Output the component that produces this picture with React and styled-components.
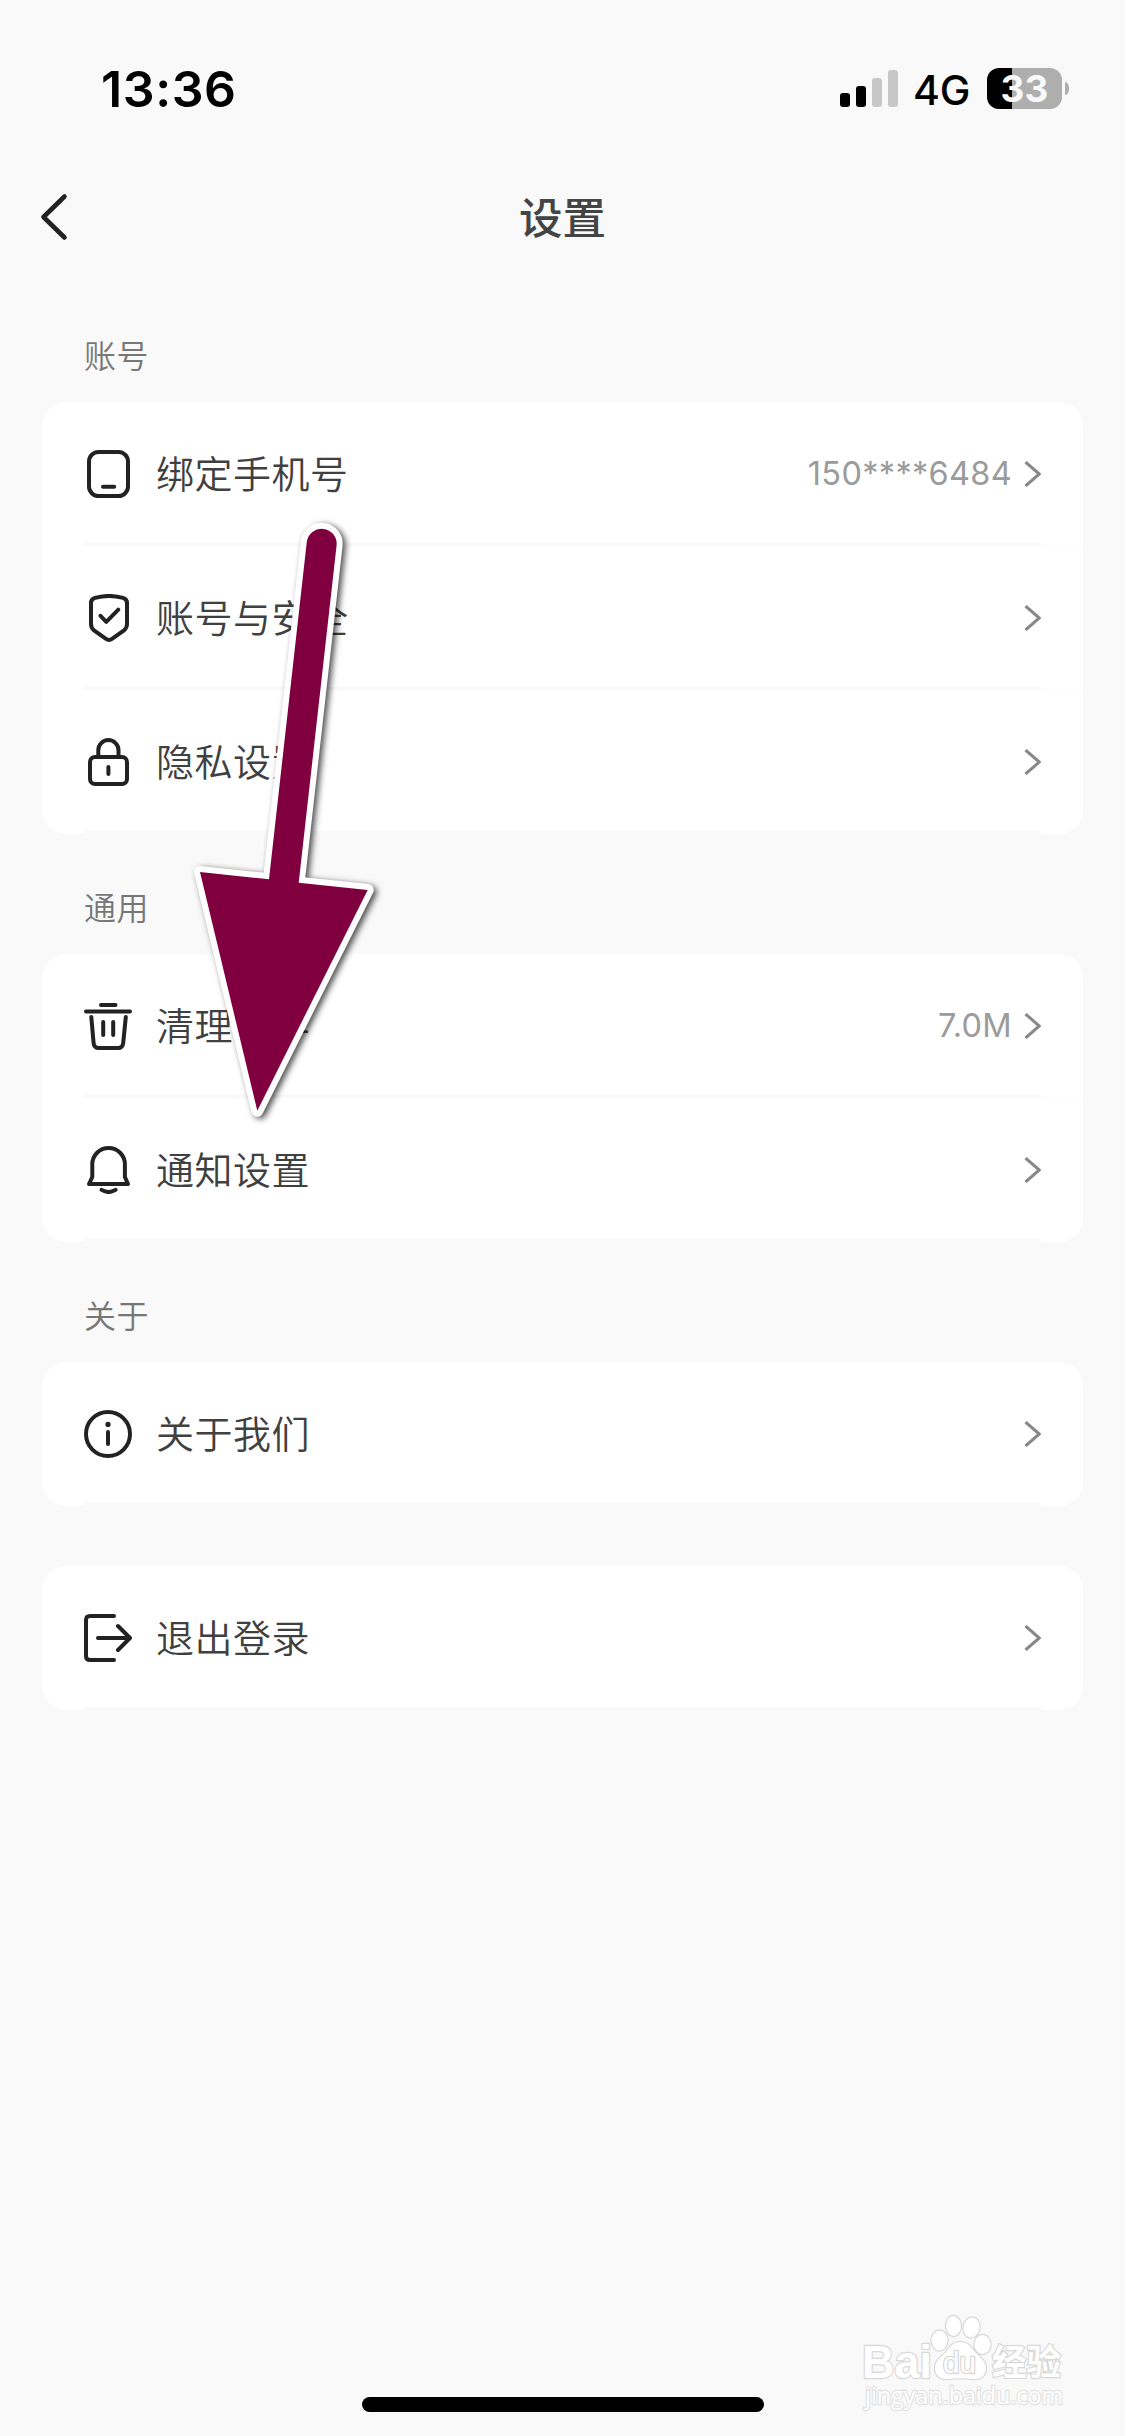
import styled, { createGlobalStyle } from "styled-components";

const GlobalStyle = createGlobalStyle`
* {
    box-sizing: border-box;
}
body {
    margin: 0;
    background-color: #f9f9f9;
    font-family: Inter, "Noto Sans CJK SC", sans-serif;
}
`;
const Screen = styled.div`
    position: relative;
    display: flex;
    flex-direction: column;
    width: 1125px;
    height: 2436px;
    overflow: hidden;
    background-color: #f9f9f9;
`;
const StatusBar = styled.div`
    display: flex;
    justify-content: space-between;
    align-items: center;
    height: 178px;
    padding: 0 56px 0 101px;
    color: #000;
`;
const Time = styled.span`
    font-size: 50px;
    font-weight: 600;
    line-height: 60px;
    letter-spacing: 0.6px;
`;
const StatusIcons = styled.div`
    display: flex;
    align-items: center;
`;
const Signal = styled.div`
    display: flex;
    align-items: flex-end;
    gap: 6px;
    height: 37px;
    margin: 0 16px 2px 0;
`;
const SignalBar = styled.i`
    width: 10px;
    height: ${(props) => props.$height}px;
    border-radius: 3px;
    background-color: ${(props) => props.$on ? '#000' : '#c7c7c7'};
`;
const Network = styled.span`
    width: 57px;
    margin-right: 16px;
    font-size: 41px;
    font-weight: 450;
    line-height: 50px;
    letter-spacing: -0.2px;
    text-indent: -1px;
    padding-top: 2px;
`;
const Battery = styled.div`
    display: flex;
    align-items: center;
    justify-content: center;
    width: 75px;
    height: 41px;
    margin-bottom: 1px;
    border-radius: 12px;
    background: linear-gradient(90deg, #000 25px, #aeaeae 25px);
    color: #f9f9f9;
    font-size: 37px;
    font-weight: 700;
    line-height: 41px;
`;
const BatteryCap = styled.i`
    width: 4px;
    height: 13px;
    margin: 0 0 1px 3px;
    border-radius: 0 4px 4px 0 / 0 6px 6px 0;
    background-color: #aeaeae;
`;
const NavBar = styled.header`
    display: grid;
    grid-template-columns: 100px 1fr 100px;
    align-items: center;
    height: 78px;
    padding: 0 38px;
`;
const BackIcon = styled.svg`
    width: 32px;
    height: 48px;
    fill: none;
    stroke: #222;
    stroke-width: 4.6;
    stroke-linecap: round;
    stroke-linejoin: round;
`;
const Title = styled.h1`
    margin: 0;
    padding-top: 1px;
    text-align: center;
    color: #444;
    font-size: 43.5px;
    font-weight: 500;
    line-height: 60px;
`;
const Content = styled.main`
    display: flex;
    flex-direction: column;
    padding: 26px 42px 0;
`;
const Section = styled.section`
    padding-top: ${(props) => props.$plain ? 60 : 30}px;
`;
const SectionTitle = styled.h2`
    height: 90px;
    margin: 0;
    padding-left: 42px;
    color: #777;
    font-size: 32px;
    font-weight: 350;
    line-height: 90px;
    letter-spacing: 0.6px;
`;
const Card = styled.div`
    border-radius: 24px;
    background-color: #fff;
    overflow: hidden;
`;
const Row = styled.div`
    display: flex;
    align-items: center;
    height: 144px;
    padding: 0 42px;
    background: linear-gradient(#f9f9f9, #f9f9f9) 42px 100% / 957px 3px no-repeat;
    &:not(:last-child) {
        background: linear-gradient(#f9f9f9, #f9f9f9) 42px 100% / 957px 3px no-repeat,
            linear-gradient(#fbfbfb, #fbfbfb) 100% 100% / 42px 1px no-repeat;
    }
`;
const RowIcon = styled.svg`
    width: 48px;
    height: 48px;
    margin-right: 24px;
    fill: none;
    stroke: #222;
    stroke-width: 4;
    stroke-linecap: round;
    stroke-linejoin: round;
`;
const RowLabel = styled.span`
    flex: 1;
    color: #404040;
    font-size: 38px;
    font-weight: 350;
    line-height: 56px;
    letter-spacing: 0.5px;
`;
const RowValue = styled.span`
    margin-right: 12px;
    color: #9b9b9b;
    font-size: 32.5px;
    font-weight: 370;
    line-height: 40px;
    letter-spacing: 0.3px;
`;
const Chevron = styled.svg`
    width: 17px;
    height: 26px;
    fill: none;
    stroke: #888;
    stroke-width: 3;
`;
const HomeIndicator = styled.div`
    width: 402px;
    height: 15px;
    margin: auto auto 24px;
    border-radius: 8px;
    background-color: #000;
`;
// sits over the list
const Pointer = styled.svg`
    position: absolute;
    left: 180px;
    top: 510px;
    width: 210px;
    height: 630px;
    filter: drop-shadow(3px 2px 3px rgba(0, 0, 0, 0.7));
    pointer-events: none;
`;
const Watermark = styled.svg`
    position: absolute;
    left: 855px;
    top: 2310px;
    width: 220px;
    height: 110px;
    fill: #fff;
    stroke: #d8d8d8;
    stroke-width: 2.4;
    paint-order: stroke;
    pointer-events: none;
`;

const icons = {
    phone: <>
        <rect x="5" y="2" width="39" height="44" rx="9.5" />
        <path d="M19 36.8H30.2" />
    </>,
    shield: <>
        <path d="M11 3.9Q25 0 39 3.9Q43 5 43 9V30Q43 34 40 36.3L28 44.9Q25 47 22 44.9L10 36.3Q7 34 7 30V9Q7 5 11 3.9Z" />
        <path d="M16.5 21.8L22.3 27.8L34.3 15.7" />
    </>,
    lock: <>
        <rect x="6" y="19" width="37" height="27" rx="5" />
        <path d="M14.3 18V12.2a10.1 10.1 0 0 1 20.2 0V18M24.4 29V36" />
    </>,
    trash: <>
        <path d="M17 3H31.5M2 9.5H46" />
        <path d="M7.3 15L9.6 41Q10 46 14.8 46H34Q38.7 46 39.2 41L41.8 15M19.2 20V33M29.2 20V33" />
    </>,
    bell: <>
        <path d="M8.3 31V18.3a16.3 16.3 0 0 1 32.6 0V31L44 38H5Z" />
        <path d="M17.6 43.9Q24.6 48.2 31.6 43.9" />
    </>,
    info: <>
        <circle cx="24" cy="24" r="22" />
        <circle cx="24" cy="14.4" r="2.6" fill="#222" stroke="none" />
        <path d="M24 22V34" />
    </>,
    logout: <>
        <path d="M30 2H6Q2 2 2 6V42Q2 46 6 46H30" />
        <path d="M14 24H45M34 12L46 24L34 36" />
    </>,
};

const sections = [
    {
        title: "账号",
        rows: [
            { icon: "phone", label: "绑定手机号", value: "150****6484" },
            { icon: "shield", label: "账号与安全" },
            { icon: "lock", label: "隐私设置" },
        ],
    },
    {
        title: "通用",
        rows: [
            { icon: "trash", label: "清理缓存", value: "7.0M" },
            { icon: "bell", label: "通知设置" },
        ],
    },
    {
        title: "关于",
        rows: [{ icon: "info", label: "关于我们" }],
    },
    {
        rows: [{ icon: "logout", label: "退出登录" }],
    },
];

const SettingRow = ({ icon, label, value }) => {
    return <Row>
        <RowIcon viewBox="0 0 48 48">{icons[icon]}</RowIcon>
        <RowLabel>{label}</RowLabel>
        {value && <RowValue>{value}</RowValue>}
        <Chevron viewBox="0 0 17 26">
            <path d="M1.5 1L15.3 13L1.5 25" />
        </Chevron>
    </Row>
}

const App = () => {
    return <>
        <GlobalStyle />
        <Screen>
            <StatusBar>
                <Time>13:36</Time>
                <StatusIcons>
                    <Signal>
                        <SignalBar $height={14} $on />
                        <SignalBar $height={21} $on />
                        <SignalBar $height={29} />
                        <SignalBar $height={37} />
                    </Signal>
                    <Network>4G</Network>
                    <Battery>33</Battery>
                    <BatteryCap />
                </StatusIcons>
            </StatusBar>
            <NavBar>
                <BackIcon viewBox="0 0 32 48">
                    <path d="M26.5 3.5L5.5 24L26.5 44.5" />
                </BackIcon>
                <Title>设置</Title>
            </NavBar>
            <Content>
                {sections.map((section, index) => (
                    <Section key={index} $plain={!section.title}>
                        {section.title && <SectionTitle>{section.title}</SectionTitle>}
                        <Card>
                            {section.rows.map((row) => <SettingRow key={row.label} {...row} />)}
                        </Card>
                    </Section>
                ))}
            </Content>
            <HomeIndicator />
            <Pointer viewBox="180 510 210 630">
                <path
                    d="M306.8 541.8A15 15 0 0 1 336.6 545.2L298.7 882.7L367.7 890L257.3 1110.7L200 872L269 879.3Z"
                    fill="#80003f"
                    stroke="#fff"
                    strokeWidth="12"
                    strokeLinejoin="round"
                    paintOrder="stroke"
                />
            </Pointer>
            <Watermark viewBox="855 2310 220 110">
                <text x="862" y="2378" fontFamily="Liberation Sans" fontWeight="700" fontSize="46" textLength="70" lengthAdjust="spacingAndGlyphs">Bai</text>
                <ellipse cx="939.5" cy="2340.5" rx="8" ry="10" />
                <ellipse cx="953.5" cy="2326" rx="7.5" ry="10" />
                <ellipse cx="971.5" cy="2327.5" rx="8" ry="10" transform="rotate(12 971.5 2327.5)" />
                <ellipse cx="982.5" cy="2344.5" rx="8" ry="9.5" />
                <path d="M960 2342C968 2342 971 2347 975 2352C980 2357 986 2361 986 2368C986 2376 980 2380 973 2379C966 2378 955 2378 948 2379C940 2380 935 2375 935 2368C935 2361 941 2357 946 2352C950 2347 953 2342 960 2342Z" />
                <text x="943" y="2373" fontFamily="Liberation Sans" fontSize="29" textLength="33" lengthAdjust="spacingAndGlyphs">du</text>
                <text x="992" y="2375" fontFamily="Noto Sans CJK SC" fontWeight="700" fontSize="35" textLength="69" lengthAdjust="spacingAndGlyphs">经验</text>
                <text x="865" y="2404" fontFamily="Open Sans" fontSize="24" textLength="198" lengthAdjust="spacingAndGlyphs" stroke="#e2e2e2">jingyan.baidu.com</text>
            </Watermark>
        </Screen>
    </>
}
export default App;
